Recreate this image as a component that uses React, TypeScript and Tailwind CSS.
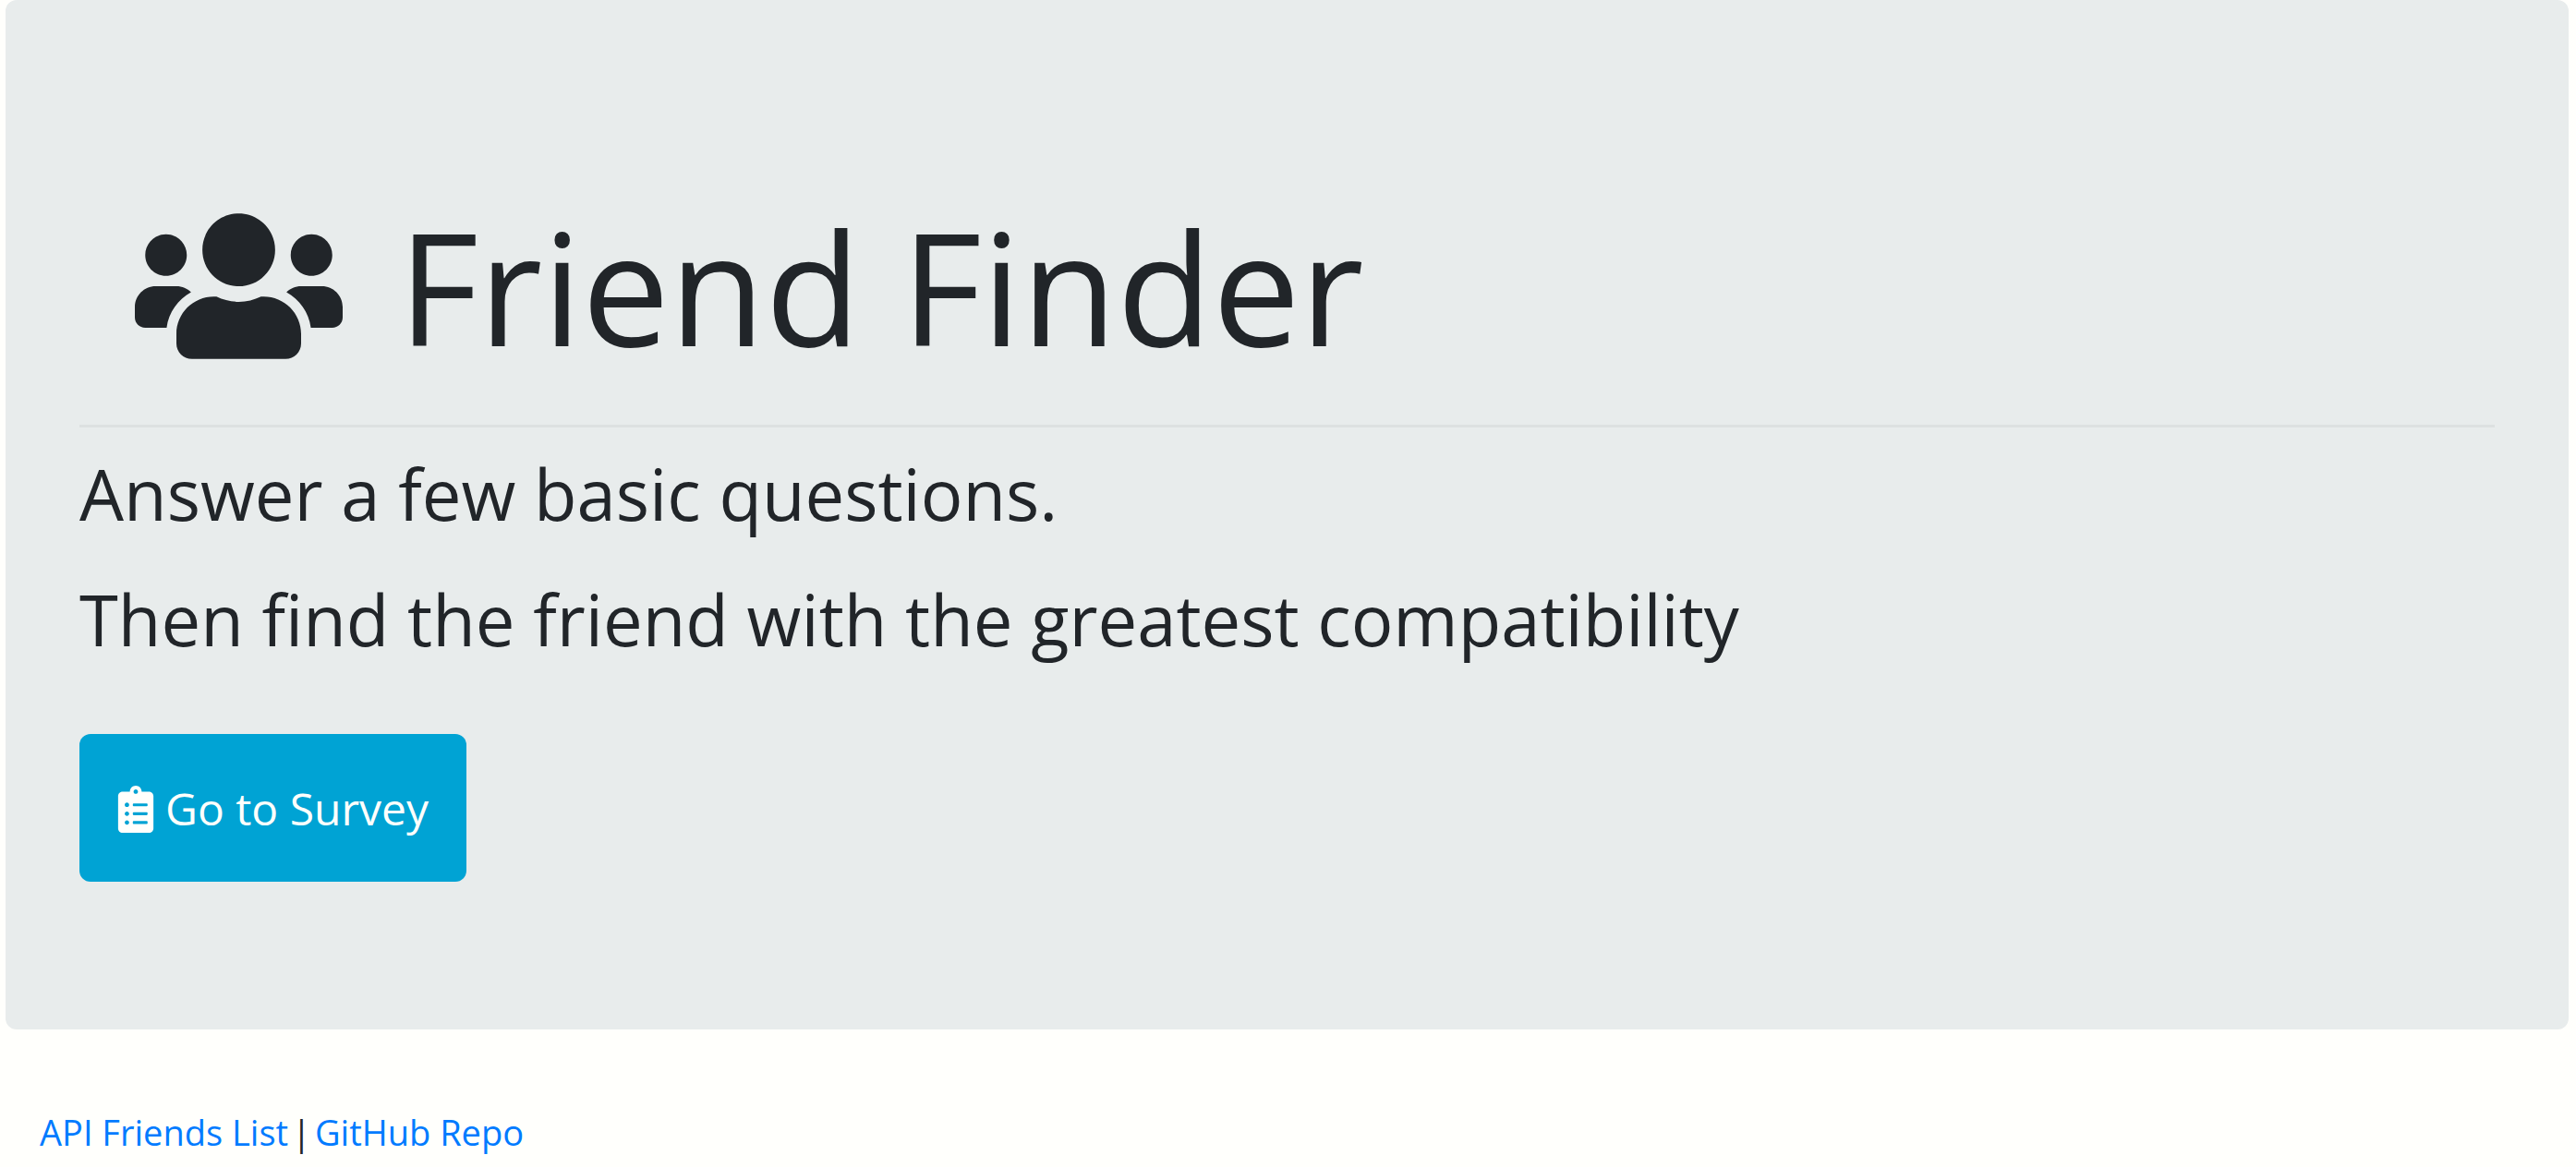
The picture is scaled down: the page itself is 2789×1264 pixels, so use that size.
import { FaClipboardList, FaUsers } from "react-icons/fa";

export default function App() {
  return (
    <div className="min-h-screen bg-[#fffffc] font-['Open_Sans','Noto_Sans',sans-serif] text-[#212529]">
      <main className="mr-2 ml-1.5 rounded-xl bg-[#e8ecec] px-20 pt-[202px] pb-40">
        <h1 className="flex items-center gap-[60px] pl-[60px] text-[169px] leading-[216px] whitespace-nowrap">
          <FaUsers className="h-[180px] w-[225px] shrink-0" aria-hidden="true" />
          <span>Friend Finder</span>
        </h1>
        <hr className="mt-[42px] border-t-[3px] border-[#dde1e1]" />
        <div className="mt-3 flex flex-col gap-4 text-[76px] leading-[120px] [font-variant-ligatures:none]">
          <p>Answer a few basic questions.</p>
          <p>Then find the friend with the greatest compatibility</p>
        </div>
        <button
          type="button"
          className="mt-16 flex h-40 cursor-pointer items-center gap-3 rounded-xl bg-[#00a3d4] px-[41px] pt-0.5 text-[48px] leading-[72px] text-[#fffffc]"
        >
          <FaClipboardList className="h-[51px] w-[40px] shrink-0" aria-hidden="true" />
          <span>Go to Survey</span>
        </button>
      </main>
      <footer className="mt-[81px] flex gap-1 px-[43px] text-[38px] leading-[60px]">
        <a href="/api/friends" className="text-[#007bff]">
          API Friends List
        </a>
        <span>|</span>
        <a href="https://github.com" className="text-[#007bff]">
          GitHub Repo
        </a>
      </footer>
    </div>
  );
}
